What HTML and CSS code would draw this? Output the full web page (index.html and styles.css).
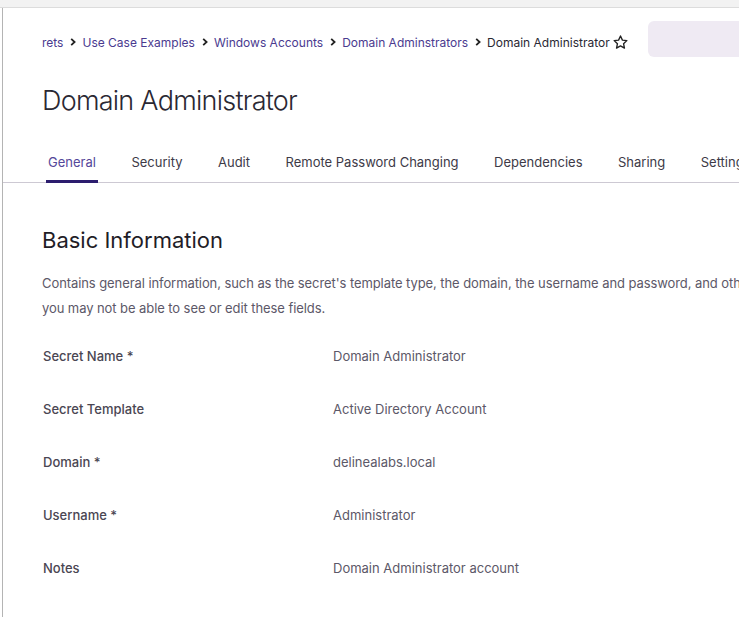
FILE: index.html
```html
<!DOCTYPE html>
<html>
<head>
<meta charset="utf-8">
<link rel="stylesheet" href="styles.css">
</head>
<body>
<div class="topbar"></div>
<div class="page">
  <header class="crumbbar">
    <nav class="crumbs">
      <a class="crumb">rets</a><span class="sep"><svg viewBox="0 0 10 10" width="10" height="10"><path d="M3.2 1.8 L6.6 5 L3.2 8.2" fill="none" stroke="#222" stroke-width="1.8"/></svg></span>
      <a class="crumb">Use Case Examples</a><span class="sep"><svg viewBox="0 0 10 10" width="10" height="10"><path d="M3.2 1.8 L6.6 5 L3.2 8.2" fill="none" stroke="#222" stroke-width="1.8"/></svg></span>
      <a class="crumb">Windows Accounts</a><span class="sep"><svg viewBox="0 0 10 10" width="10" height="10"><path d="M3.2 1.8 L6.6 5 L3.2 8.2" fill="none" stroke="#222" stroke-width="1.8"/></svg></span>
      <a class="crumb">Domain Adminstrators</a><span class="sep"><svg viewBox="0 0 10 10" width="10" height="10"><path d="M3.2 1.8 L6.6 5 L3.2 8.2" fill="none" stroke="#222" stroke-width="1.8"/></svg></span>
      <span class="current">Domain Administrator</span>
      <span class="star"><svg viewBox="0 0 24 24" width="17" height="17"><path d="M12 2.8 L14.7 8.6 L21 9.3 L16.3 13.6 L17.6 19.9 L12 16.7 L6.4 19.9 L7.7 13.6 L3 9.3 L9.3 8.6 Z" fill="none" stroke="#222" stroke-width="1.9" stroke-linejoin="round"/></svg></span>
    </nav>
    <div class="actions"></div>
  </header>
  <h1 class="title">Domain Administrator</h1>
  <nav class="tabs">
    <span class="tab active">General</span>
    <span class="tab">Security</span>
    <span class="tab">Audit</span>
    <span class="tab">Remote Password Changing</span>
    <span class="tab">Dependencies</span>
    <span class="tab">Sharing</span>
    <span class="tab">Settings</span>
  </nav>
  <section class="section">
    <h2 class="section-title">Basic Information</h2>
    <p class="desc">Contains general information, such as the secret's template type, the domain, the username and password, and other details. Depending on your permissions,<br>you may not be able to see or edit these fields.</p>
    <dl class="fields">
      <div class="field"><dt>Secret Name *</dt><dd>Domain Administrator</dd></div>
      <div class="field"><dt>Secret Template</dt><dd>Active Directory Account</dd></div>
      <div class="field"><dt>Domain *</dt><dd>delinealabs.local</dd></div>
      <div class="field"><dt>Username *</dt><dd>Administrator</dd></div>
      <div class="field"><dt>Notes</dt><dd>Domain Administrator account</dd></div>
    </dl>
  </section>
</div>
</body>
</html>
```
FILE: styles.css
```css
html, body {
  margin: 0;
  padding: 0;
  background: #fff;
  overflow: hidden;
  width: 739px;
  height: 617px;
}
body {
  font-family: "Inter", "Noto Sans", sans-serif;
  color: #2a2833;
}
.topbar {
  height: 7px;
  background: #f2f2f2;
  border-bottom: 1px solid #dcdcdc;
}
.page {
  margin-left: 2px;
  border-left: 1px solid #b4b4b4;
  height: 620px;
  width: 900px;
  padding-top: 13px;
  box-sizing: border-box;
}
.crumbbar {
  display: flex;
  align-items: center;
  height: 36px;
  padding-left: 39px;
}
.crumbs {
  display: flex;
  align-items: center;
  font-size: 12px;
  white-space: nowrap;
  flex: none;
  padding-top: 6px;
}
.crumb {
  color: #4a3a8f;
}
.sep {
  display: inline-flex;
  margin: 0 4px 0 5px;
}
.current {
  color: #2a2833;
}
.star {
  display: inline-flex;
  margin-left: 2px;
}
.actions {
  margin-left: 19px;
  width: 240px;
  height: 36px;
  border-radius: 6px;
  background: #efeaf3;
}
.title {
  margin: 26px 0 0 39px;
  font-size: 27px;
  font-weight: 300;
  letter-spacing: -0.75px;
  line-height: 36px;
  color: #2a2833;
}
.tabs {
  display: flex;
  margin-top: 35px;
  padding-left: 43px;
  border-bottom: 1px solid #cdc9d3;
  white-space: nowrap;
}
.tab {
  font-size: 13px;
  color: #3d3a47;
  padding: 0 2px 10px;
  margin-right: 31.5px;
  border-bottom: 3px solid transparent;
  margin-bottom: -1px;
}
.tab.active {
  color: #54479a;
  border-bottom-color: #2c1d6e;
}
.section {
  padding-left: 39px;
  width: 700px;
}
.section-title {
  margin: 43px 0 0;
  font-size: 22px;
  font-weight: 400;
  line-height: 28px;
  color: #1f1d27;
}
.desc {
  margin: 17px 0 0;
  font-size: 13px;
  letter-spacing: -0.08px;
  line-height: 25px;
  color: #5c5868;
  white-space: nowrap;
}
.fields {
  margin: 25px 0 0;
}
.field {
  display: flex;
  height: 53px;
  align-items: flex-start;
}
.field dt {
  width: 290px;
  padding-left: 1px;
  font-size: 13px;
  font-weight: 500;
  color: #4a4652;
  line-height: 20px;
}
.field dd {
  margin: 0;
  font-size: 13px;
  color: #5c5868;
  line-height: 20px;
}
```
